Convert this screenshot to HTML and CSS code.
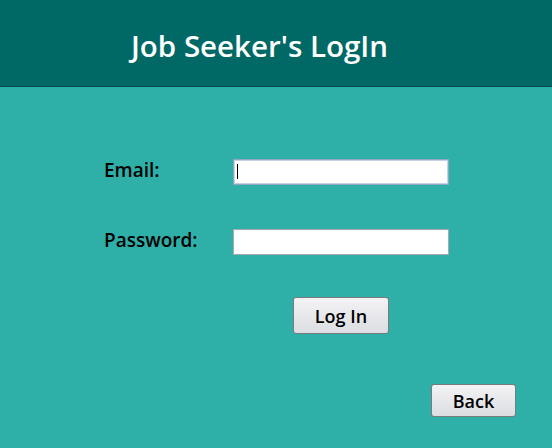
FILE: index.html
```html
<!DOCTYPE html>
<html>
<head>
<meta charset="utf-8">
<link rel="stylesheet" href="styles.css">
</head>
<body>
<header class="top">
  <h1 class="title">Job Seeker's LogIn</h1>
</header>
<main class="main">
  <form class="form">
    <div class="row">
      <label class="label" for="email">Email:</label>
      <span class="field-wrap">
        <input class="field focused" id="email" type="text">
        <span class="caret"></span>
      </span>
    </div>
    <div class="row row-pass">
      <label class="label" for="pw">Password:</label>
      <span class="field-wrap">
        <input class="field" id="pw" type="password">
      </span>
    </div>
    <div class="actions">
      <button class="btn btn-login" type="button">Log In</button>
    </div>
  </form>
  <div class="back-row">
    <button class="btn btn-back" type="button">Back</button>
  </div>
</main>
</body>
</html>
```
FILE: styles.css
```css
html, body {
  margin: 0;
  padding: 0;
  height: 100%;
}
body {
  background: #2eafa8;
  font-family: "Open Sans", "DejaVu Sans", sans-serif;
  font-weight: 600;
  color: #000;
  overflow: hidden;
}
.top {
  background: #006966;
  height: 87px;
  border-bottom: 1px solid #024b49;
  box-sizing: border-box;
  display: flex;
  align-items: center;
  padding-left: 131px;
}
.title {
  margin: 0;
  color: #fff;
  font-size: 29.5px;
  font-weight: 600;
  line-height: 1;
  padding-top: 6px;
}
.main {
  padding-top: 72px;
}
.form {
  margin: 0;
}
.row {
  display: flex;
  align-items: center;
  padding-left: 104px;
  height: 26px;
}
.row-pass {
  margin-top: 44px;
}
.label {
  width: 129px;
  font-size: 19px;
  padding-bottom: 4px;
}
.field-wrap {
  position: relative;
  display: block;
  width: 216px;
  height: 26px;
}
.field {
  display: block;
  width: 216px;
  height: 26px;
  box-sizing: border-box;
  border: 1px solid #aaa;
  background: #fff;
  margin: 0;
  padding: 0 3px;
  outline: none;
}
.focused {
  border: 1px solid #8fa4c4;
  box-shadow: inset 0 0 0 1px #c6d3e6;
}
.caret {
  position: absolute;
  left: 4px;
  top: 5px;
  width: 1px;
  height: 15px;
  background: #000;
}
.actions {
  display: flex;
  padding-left: 293px;
  margin-top: 42px;
}
.btn {
  font-family: "Open Sans", "DejaVu Sans", sans-serif;
  font-weight: 600;
  font-size: 18px;
  color: #000;
  background: linear-gradient(#f3f3f5, #dcdde2);
  border: 1px solid #7a7a7a;
  border-radius: 3px;
  padding: 0;
  margin: 0;
}
.btn-login {
  width: 96px;
  height: 37px;
}
.back-row {
  display: flex;
  justify-content: flex-end;
  padding-right: 36px;
  margin-top: 50px;
}
.btn-back {
  width: 85px;
  height: 33px;
}
```
